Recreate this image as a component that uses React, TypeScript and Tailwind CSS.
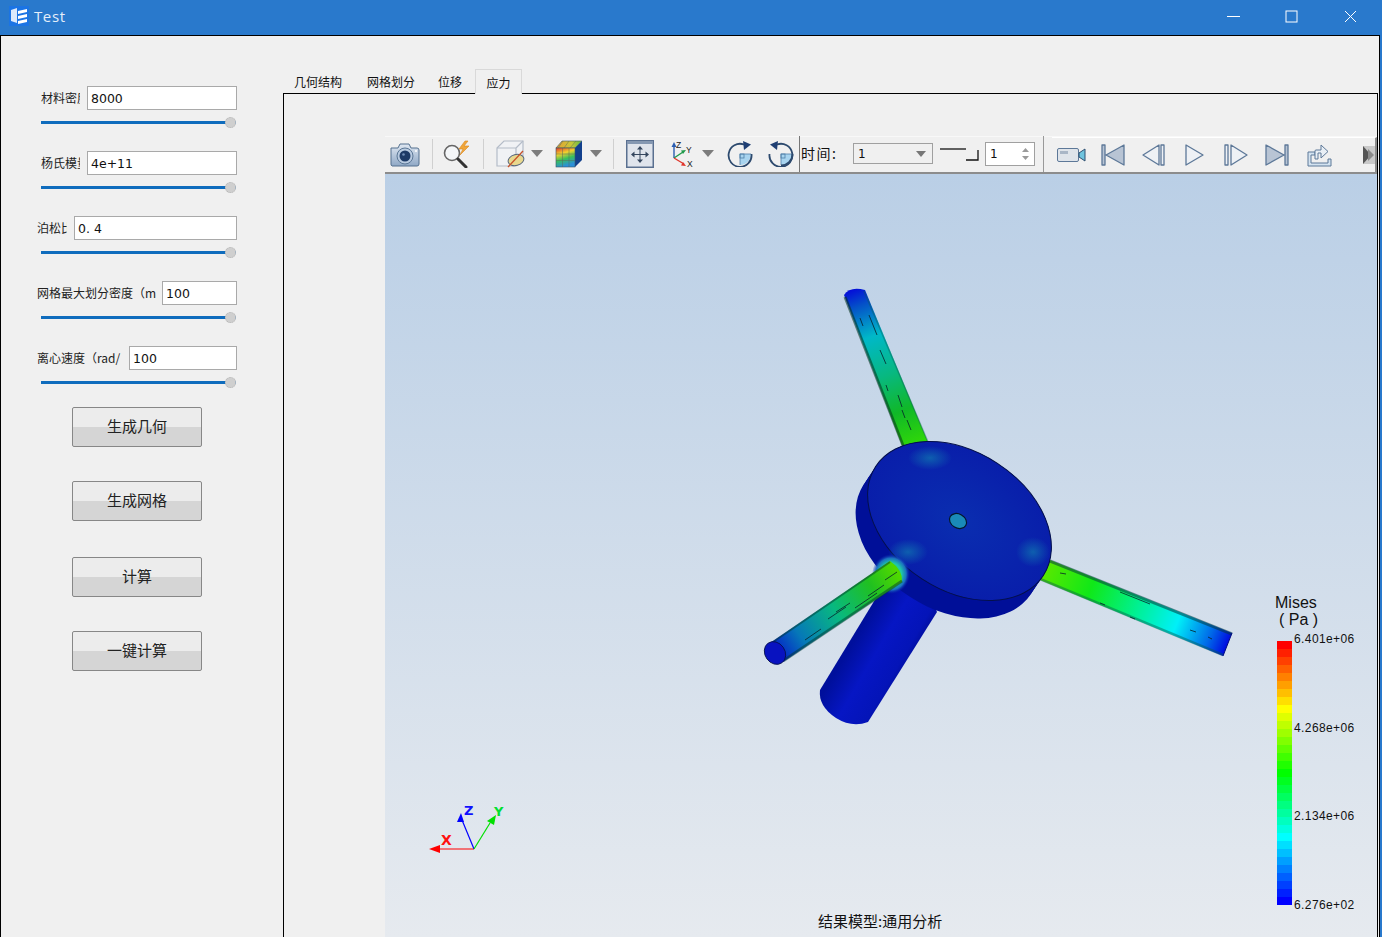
const cjk = "font-['Noto_Sans_CJK_SC','Liberation_Sans',sans-serif]";

const params = [
  { label: '材料密度', value: '8000', labelClass: 'ml-[4px] w-[39px]', gapClass: 'mr-[7px]' },
  { label: '杨氏模量', value: '4e+11', labelClass: 'ml-[4px] w-[39px]', gapClass: 'mr-[7px]' },
  { label: '泊松比', value: '0. 4', labelClass: 'w-[30px]', gapClass: 'mr-[7px]' },
  { label: '网格最大划分密度（m', value: '100', labelClass: 'w-[119px]', gapClass: 'mr-[6px]' },
  { label: '离心速度（rad/', value: '100', labelClass: 'w-[86px]', gapClass: 'mr-[6px]' },
];

const buttons = [
  { text: '生成几何', cls: 'mb-[34px]' },
  { text: '生成网格', cls: 'mb-[36px]' },
  { text: '计算', cls: 'mb-[34px]' },
  { text: '一键计算', cls: '' },
];

const tabs = [
  { text: '几何结构', cls: 'w-[72px] pl-[10px]' },
  { text: '网格划分', cls: 'w-[72px] pl-[11px]' },
  { text: '位移', cls: 'w-[37px] pl-[10px] mr-[1px]' },
];

// legend colour bands, red at the top to blue at the bottom
function bandColor(t: number) {
  const stops: [number, number, number, number][] = [
    [0, 255, 0, 0],
    [0.25, 255, 255, 0],
    [0.5, 0, 255, 0],
    [0.75, 0, 255, 255],
    [1, 0, 0, 255],
  ];
  for (let i = 0; i < stops.length - 1; i++) {
    const a = stops[i];
    const b = stops[i + 1];
    if (t <= b[0]) {
      const k = (t - a[0]) / (b[0] - a[0]);
      return `rgb(${a[1] + (b[1] - a[1]) * k},${a[2] + (b[2] - a[2]) * k},${a[3] + (b[3] - a[3]) * k})`;
    }
  }
  return 'rgb(0,0,255)';
}
const bands = Array.from({ length: 33 }, (_, i) => bandColor(i / 32));

const legendTicks = [
  { text: '6.401e+06', cls: 'top-[457px]' },
  { text: '4.268e+06', cls: 'top-[546px]' },
  { text: '2.134e+06', cls: 'top-[634px]' },
  { text: '6.276e+02', cls: 'top-[723px]' },
];

function CameraIcon() {
  return (
    <svg className="w-[30px] h-[26px]" viewBox="0 0 30 26">
      <defs>
        <linearGradient id="camBody" x1="0" y1="0" x2="0" y2="1">
          <stop offset="0" stopColor="#dfe7f1" />
          <stop offset="1" stopColor="#8fa8c6" />
        </linearGradient>
      </defs>
      <path d="M1 7h7l2-4h9l2 4h6a2 2 0 0 1 2 2v14a2 2 0 0 1-2 2H2a2 2 0 0 1-1-2z" fill="url(#camBody)" stroke="#54708f" strokeWidth="1" />
      <circle cx="15" cy="15" r="8" fill="#b9cbe0" stroke="#5a7695" />
      <circle cx="15" cy="15" r="5.5" fill="#1d3a66" />
      <circle cx="13.5" cy="13.5" r="1.3" fill="#6f8db5" />
      <circle cx="26" cy="10" r="1" fill="#ffffff" />
    </svg>
  );
}

function SearchBoltIcon() {
  return (
    <svg className="w-[30px] h-[28px]" viewBox="0 0 30 28">
      <circle cx="10" cy="13" r="7.5" fill="#f4f6f8" stroke="#666" strokeWidth="1.600" />
      <path d="M16 19l8 8" stroke="#333" strokeWidth="3" strokeLinecap="round" />
      <path d="M23 1l-6 8h4l-3 6 9-9h-5l4-5z" fill="#f0a63a" stroke="#d9861f" strokeWidth="0.6" />
    </svg>
  );
}

function HiddenCubeIcon() {
  return (
    <svg className="w-[30px] h-[28px]" viewBox="0 0 30 28">
      <path d="M1 8l7-7h19v17l-7 8H1z" fill="#f0f2f5" stroke="#b4bcc8" strokeWidth="1.2" />
      <path d="M1 8h19v18M20 8l7-7" fill="none" stroke="#b4bcc8" strokeWidth="1.2" />
      <ellipse cx="20" cy="20" rx="8" ry="5.5" fill="#e8d88e" stroke="#56657a" strokeWidth="1" transform="rotate(-15 20 20)" />
      <path d="M12 27L27 11" stroke="#c8522a" strokeWidth="1.3" />
    </svg>
  );
}

function ColorCubeIcon() {
  return (
    <svg className="w-[28px] h-[28px]" viewBox="0 0 28 28">
      <defs>
        <linearGradient id="cubeFront" x1="0" y1="0" x2="0.3" y2="1">
          <stop offset="0" stopColor="#e0392a" />
          <stop offset="0.35" stopColor="#f2d22e" />
          <stop offset="0.65" stopColor="#38c05a" />
          <stop offset="1" stopColor="#2b8fd8" />
        </linearGradient>
        <linearGradient id="cubeTop" x1="0" y1="0" x2="1" y2="0">
          <stop offset="0" stopColor="#e8a030" />
          <stop offset="0.6" stopColor="#c8c838" />
          <stop offset="1" stopColor="#58b848" />
        </linearGradient>
      </defs>
      <path d="M1 8l6-7h20L20 8z" fill="url(#cubeTop)" stroke="#3b5568" strokeWidth="0.6" />
      <path d="M20 8l7-7v19l-7 7z" fill="#12408c" />
      <rect x="1" y="8" width="19" height="19" fill="url(#cubeFront)" stroke="#3b5568" strokeWidth="0.6" />
      <path d="M7.5 8v19M14 8v19M1 14h19M1 20.5h19M8 1L3 8M14 1L9 8M21 1l-6 7" stroke="#5a6a5a" strokeWidth="0.5" />
    </svg>
  );
}

function DropArrow() {
  return (
    <svg className="w-[12px] h-[7px]" viewBox="0 0 12 7">
      <path d="M0 0h12L6 7z" fill="#7c7c7c" />
    </svg>
  );
}

function FitIcon() {
  return (
    <svg className="w-[28px] h-[28px]" viewBox="0 0 28 28">
      <rect x="0.75" y="0.75" width="26.500" height="26.500" fill="#dfe4ec" stroke="#5a7090" strokeWidth="1.500" />
      <rect x="1" y="1" width="26" height="3" fill="#8598b2" />
      <path d="M14 8v13M8 14.500h12" stroke="#34465e" strokeWidth="1" />
      <path d="M14 6l-3 3.500h6zM14 23l-3-3.500h6zM5 14.500l3.500-3v6zM23 14.500l-3.500-3v6z" fill="#34465e" />
    </svg>
  );
}

function AxesIcon() {
  return (
    <svg className="w-[26px] h-[28px]" viewBox="0 0 26 28">
      <path d="M4 18V6" stroke="#2b5db0" strokeWidth="1.4" />
      <path d="M4 2l-2.500 5h5z" fill="#2b5db0" />
      <path d="M4 18l9-6" stroke="#1f9a4a" strokeWidth="1.4" />
      <path d="M16 10l-5 .5 2 3.500z" fill="#1f9a4a" />
      <path d="M4 18l10 6" stroke="#e0352b" strokeWidth="1.4" />
      <path d="M16 26l-5-.5 2-3.500z" fill="#e0352b" />
      <text x="6" y="8" fontSize="8.500" fontFamily="'Liberation Sans',sans-serif" fill="#222">Z</text>
      <text x="16" y="13" fontSize="8.500" fontFamily="'Liberation Sans',sans-serif" fill="#222">Y</text>
      <text x="17" y="27" fontSize="8.500" fontFamily="'Liberation Sans',sans-serif" fill="#222">X</text>
    </svg>
  );
}

function RotateIcon({ flip }: { flip?: boolean }) {
  return (
    <svg className="w-[26px] h-[27px]" viewBox="0 0 26 27">
      <path d="M13 14h11a11 11 0 0 1-11 11z" fill="#a8d4ef" />
      <rect x="13" y="14" width="4" height="4" fill="none" stroke="#4f7fa8" strokeWidth="0.8" />
      <path d="M13 14h11M13 14v11" stroke="#4f7fa8" strokeWidth="0.8" />
      <g transform={flip ? 'translate(26 0) scale(-1 1)' : undefined}>
        <path d="M17 4.500A11.500 11.500 0 1 0 24.500 14" fill="none" stroke="#2d4a6e" strokeWidth="1.800" />
        <path d="M16 1l8 3.500-7 5.500z" fill="#1f3f73" />
      </g>
      {flip && <path d="M24.500 14A11.500 11.500 0 0 1 13 25.500" fill="none" stroke="#2d4a6e" strokeWidth="1.800" />}
    </svg>
  );
}

function VideoIcon() {
  return (
    <svg className="w-[30px] h-[16px]" viewBox="0 0 30 16">
      <rect x="0.500" y="1.500" width="21" height="13" rx="1.500" fill="#dfe4ea" stroke="#5d7898" />
      <rect x="3" y="4" width="8" height="3" fill="#a9b6c6" />
      <path d="M22 6l6-4v12l-6-4z" fill="#6fc4de" stroke="#2f4f70" />
    </svg>
  );
}

function PlayerIcon({ d, fill }: { d: string; fill: string }) {
  return (
    <svg className="w-[24px] h-[22px]" viewBox="0 0 24 22">
      <path d={d} fill={fill} stroke="#5d7898" strokeWidth="1.300" strokeLinejoin="round" />
    </svg>
  );
}

function ShareIcon() {
  return (
    <svg className="w-[26px] h-[24px]" viewBox="0 0 26 24">
      <path d="M1 9h7v3H4v8h17v-4h3v7H1z" fill="#d4e3f0" stroke="#5d7898" />
      <path d="M8 16V8a1 1 0 0 1 1-1h5V2l7 6.500-7 6.500v-5h-3v6z" fill="#e9eff5" stroke="#5d7898" />
    </svg>
  );
}

function Model() {
  const sideOffsets = [0, 0.2, 0.4, 0.6, 0.8, 1];
  return (
    <svg className="absolute inset-0 w-full h-full" viewBox="385 174 992 763">
      <defs>
        <linearGradient id="armTop" gradientUnits="userSpaceOnUse" x1="853" y1="290" x2="915" y2="445">
          <stop offset="0" stopColor="#0410d8" />
          <stop offset="0.1" stopColor="#0450c8" />
          <stop offset="0.3" stopColor="#00b8c8" />
          <stop offset="0.55" stopColor="#08b880" />
          <stop offset="0.78" stopColor="#10b828" />
          <stop offset="1" stopColor="#30d808" />
        </linearGradient>
        <linearGradient id="armRight" gradientUnits="userSpaceOnUse" x1="1045" y1="570" x2="1228" y2="645">
          <stop offset="0" stopColor="#58e800" />
          <stop offset="0.25" stopColor="#10e818" />
          <stop offset="0.5" stopColor="#00f090" />
          <stop offset="0.72" stopColor="#00f0f8" />
          <stop offset="0.9" stopColor="#0068e8" />
          <stop offset="1" stopColor="#0008e0" />
        </linearGradient>
        <linearGradient id="armLeft" gradientUnits="userSpaceOnUse" x1="776" y1="652" x2="896" y2="571">
          <stop offset="0" stopColor="#0420c8" />
          <stop offset="0.2" stopColor="#0678b8" />
          <stop offset="0.5" stopColor="#08b880" />
          <stop offset="0.8" stopColor="#20c020" />
          <stop offset="1" stopColor="#50d800" />
        </linearGradient>
        <linearGradient id="thick" gradientUnits="userSpaceOnUse" x1="825" y1="690" x2="880" y2="722">
          <stop offset="0" stopColor="#000f9c" />
          <stop offset="0.4" stopColor="#0616c4" />
          <stop offset="0.8" stopColor="#0414b8" />
          <stop offset="1" stopColor="#000c90" />
        </linearGradient>
        <radialGradient id="face" cx="0.5" cy="0.5" r="0.7">
          <stop offset="0" stopColor="#0a2eb0" />
          <stop offset="1" stopColor="#0818a8" />
        </radialGradient>
        <radialGradient id="halo">
          <stop offset="0" stopColor="#30d020" />
          <stop offset="0.55" stopColor="#20c8a8" />
          <stop offset="0.8" stopColor="#1a70c0" />
          <stop offset="1" stopColor="#0a20b0" stopOpacity="0" />
        </radialGradient>
        <radialGradient id="patch">
          <stop offset="0" stopColor="#0f6eb0" stopOpacity="0.8" />
          <stop offset="1" stopColor="#0f6eb0" stopOpacity="0" />
        </radialGradient>
      </defs>

      {/* thick lower shaft */}
      <path d="M820 690L890 575L925 585L937 612L868 722Q852 728 836 718Q818 706 820 690Z" fill="url(#thick)" />

      {/* upper arm */}
      <path d="M844 295Q850 286 865 290L928 442L903 448Z" fill="url(#armTop)" />
      <path d="M845 297L904 448" stroke="#05301c" strokeWidth="3" opacity="0.55" />
      <path d="M864 291L928 442" stroke="#0a5a5a" strokeWidth="1.500" opacity="0.4" />
      <path d="M869 315l8 20M880 350l6 14M898 395l4 12M907 420l4 10M860 318l3 8M886 385l2 6M902 410l3 8" stroke="#06222a" strokeWidth="0.8" fill="none" />

      {/* right arm */}
      <path d="M1050 560L1232 633L1223 656L1040 580Z" fill="url(#armRight)" />
      <path d="M1050 561L1232 634" stroke="#053a40" strokeWidth="3" opacity="0.55" />
      <path d="M1040 579L1223 655" stroke="#0a5a50" strokeWidth="2.500" opacity="0.45" />
      <path d="M1120 592l30 12M1190 630l6 2M1100 603l5 2M1130 617l5 2M1208 637l4 2M1060 573l6 1" stroke="#06222a" strokeWidth="0.8" fill="none" />
      <path d="M1232 633L1223 656" stroke="#000a80" strokeWidth="1" />

      {/* disc body */}
      {sideOffsets.map((k) => (
        <ellipse key={k} cx={959.5 - 12 * k} cy={521 + 18 * k} rx="100" ry="69" transform={`rotate(33 ${959.5 - 12 * k} ${521 + 18 * k})`} fill="#000f98" />
      ))}
      <ellipse cx="959.5" cy="521" rx="100" ry="69" transform="rotate(33 959.5 521)" fill="url(#face)" stroke="#04104a" strokeWidth="1" />
      <ellipse cx="930" cy="458" rx="22" ry="12" fill="url(#patch)" />
      <ellipse cx="1033" cy="552" rx="17" ry="15" fill="url(#patch)" />
      <ellipse cx="908" cy="552" rx="20" ry="13" fill="url(#patch)" />
      <ellipse cx="958" cy="521" rx="9" ry="7" transform="rotate(30 958 521)" fill="#1a8ab8" stroke="#04182a" strokeWidth="1.200" />

      {/* left arm and its hub */}
      <ellipse cx="891" cy="574" rx="19" ry="20" fill="url(#halo)" />
      <path d="M770 643L890 561Q903 570 902 582L783 662Z" fill="url(#armLeft)" />
      <path d="M770 644L890 562" stroke="#053a30" strokeWidth="2" opacity="0.5" />
      <path d="M783 661L902 581" stroke="#053a30" strokeWidth="3" opacity="0.5" />
      <path d="M805 640l16-11M828 619l18-12M855 608l22-15M868 596l16-11M836 612l14-9M885 580l12-8" stroke="#06222a" strokeWidth="0.8" fill="none" />
      <ellipse cx="775" cy="653" rx="10" ry="12" transform="rotate(-35 775 653)" fill="#0812c0" stroke="#04104a" strokeWidth="0.8" />

      {/* triad */}
      <path d="M474 849H438" stroke="#ff0000" strokeWidth="1.200" />
      <path d="M429 849l11-4v8z" fill="#ff0000" />
      <path d="M474 849L462 820" stroke="#0000ff" strokeWidth="1.200" />
      <path d="M461 813l3 9h-7z" fill="#0000ff" />
      <path d="M474 849L490 823" stroke="#00e000" strokeWidth="1.200" />
      <path d="M496 815l-2 10-7-4z" fill="#00e000" />
      <text x="441" y="845" fontSize="14" fontWeight="700" fontFamily="'DejaVu Sans',sans-serif" fill="#ff1010">X</text>
      <text x="464" y="815" fontSize="13" fontWeight="700" fontFamily="'DejaVu Sans',sans-serif" fill="#1010ff">Z</text>
      <text x="494" y="816" fontSize="13" fontWeight="700" fontFamily="'DejaVu Sans',sans-serif" fill="#00e030">Y</text>
    </svg>
  );
}

export default function App() {
  return (
    <div className={`h-[937px] w-[1382px] overflow-hidden flex flex-col bg-[#2979cc] ${cjk}`}>
      {/* title bar */}
      <div className="h-[35px] shrink-0 flex items-center pb-[3px] text-white">
        <svg className="ml-[9px] w-[20px] h-[20px]" viewBox="0 0 20 20">
          <rect width="20" height="20" fill="#1b74e4" />
          <path d="M2 4l6-2v15l-6-2z" fill="#dbe9fb" />
          <path d="M9 5l9-2v3l-9 2zM9 10l9-2v3l-9 2zM9 15l9-2v3l-9 2z" fill="#ffffff" />
        </svg>
        <span className="ml-[5px] w-[32px] text-[15px] tracking-[0.6px] text-[#e4eefa] font-['Open_Sans',sans-serif]">Test</span>
        <svg className="ml-[1161px] w-[13px] h-[13px]" viewBox="0 0 13 13">
          <path d="M0 6.500h13" stroke="#ffffff" strokeWidth="1" />
        </svg>
        <svg className="ml-[45px] w-[13px] h-[13px]" viewBox="0 0 13 13">
          <rect x="1" y="1" width="11" height="11" fill="none" stroke="#ffffff" strokeWidth="1" />
        </svg>
        <svg className="ml-[46px] w-[13px] h-[13px]" viewBox="0 0 13 13">
          <path d="M1 1l11 11M12 1L1 12" stroke="#ffffff" strokeWidth="1" />
        </svg>
      </div>

      <div className="flex-1 min-h-0 mr-[2px] flex border-t border-l border-r border-black bg-[#f0f0f0]">
        {/* parameter panel */}
        <div className="w-[282px] shrink-0 pl-[36px] pt-[50px]">
          <div className="w-[200px] h-[321px]">
            {params.map((p) => (
              <div key={p.label} className="h-[65px]">
                <div className="flex items-center h-[24px]">
                  <span className={`${p.labelClass} ${p.gapClass} shrink-0 overflow-hidden whitespace-nowrap text-[12px] text-[#222]`}>
                    {p.label}
                  </span>
                  <div className="flex-1 h-[24px] border border-[#a9a9a9] bg-white pl-[3px] leading-[24px] text-[12.500px] text-[#111] font-['DejaVu_Sans',sans-serif]">
                    {p.value}
                  </div>
                </div>
                <div className="relative ml-[4px] mr-[1px] mt-[11px] h-[3px] bg-[#0f6cbd]">
                  <div className="absolute right-[0px] top-[-4px] w-[11px] h-[11px] rounded-full bg-[#cfcfcf] border border-dotted border-[#b5b5b5]" />
                </div>
              </div>
            ))}
          </div>
          <div className="ml-[35px]">
            {buttons.map((b) => (
              <div
                key={b.text}
                className={`${b.cls} w-[130px] h-[40px] rounded-[2px] border border-[#878787] bg-[linear-gradient(to_bottom,#ececec_0%,#ececec_50%,#d5d5d5_50%,#d5d5d5_100%)] flex items-center justify-center pb-[2px] text-[15px] text-[#222]`}
              >
                {b.text}
              </div>
            ))}
          </div>
        </div>

        {/* tabs and result view */}
        <div className="flex-1 min-w-0 flex flex-col pr-[1px] pt-[33px]">
          <div className="h-[24px] shrink-0 flex items-end ml-[1px]">
            {tabs.map((t) => (
              <div key={t.text} className={`${t.cls} h-[24px] leading-[26px] text-[12px] text-[#111] whitespace-nowrap`}>
                {t.text}
              </div>
            ))}
            <div className="ml-[9px] w-[47px] h-[25px] -mb-[1px] relative border-t border-l border-r border-[#d9d9d9] bg-[#f0f0f0] text-center leading-[25px] text-[12px] text-[#111]">
              应力
            </div>
          </div>
          <div className="flex-1 min-h-0 flex flex-col border-t border-l border-r border-black pl-[101px] pt-[42px]">
            {/* viewer toolbar */}
            <div className="h-[38px] shrink-0 flex items-center pb-[2px] border-t border-t-[#f8f8f8] border-b-2 border-b-[#8c8c8c] bg-[#f0f0f0]">
              <div className="ml-[5px]"><CameraIcon /></div>
              <div className="ml-[12px] w-px h-[30px] bg-[#d0d0d0]" />
              <div className="ml-[9px]"><SearchBoltIcon /></div>
              <div className="ml-[11px] w-px h-[30px] bg-[#d0d0d0]" />
              <div className="ml-[12px]"><HiddenCubeIcon /></div>
              <div className="ml-[5px]"><DropArrow /></div>
              <div className="ml-[12px]"><ColorCubeIcon /></div>
              <div className="ml-[7px]"><DropArrow /></div>
              <div className="ml-[11px] w-px h-[30px] bg-[#d0d0d0]" />
              <div className="ml-[12px]"><FitIcon /></div>
              <div className="ml-[16px]"><AxesIcon /></div>
              <div className="ml-[6px]"><DropArrow /></div>
              <div className="ml-[13px]"><RotateIcon /></div>
              <div className="ml-[15px]"><RotateIcon flip /></div>
              <div className="ml-[5px] w-px h-[36px] bg-[#777]" />
              <span className="ml-[1px] w-[52px] shrink-0 text-[14px] tracking-[1.500px] text-[#111] whitespace-nowrap">时间:</span>
              <div className="w-[80px] h-[21px] shrink-0 border border-[#a0a0a0] flex items-center justify-between pl-[4px] pr-[6px] text-[12px] text-[#111] font-['DejaVu_Sans',sans-serif]">
                1
                <svg className="w-[10px] h-[6px]" viewBox="0 0 10 6">
                  <path d="M0 0h10L5 6z" fill="#777" />
                </svg>
              </div>
              <svg className="ml-[7px] w-[39px] h-[16px] shrink-0" viewBox="0 0 39 16">
                <path d="M0 3h26" stroke="#111" strokeWidth="1.300" />
                <path d="M26 14h12V4" fill="none" stroke="#111" strokeWidth="1.300" />
              </svg>
              <div className="ml-[6px] w-[50px] h-[24px] shrink-0 border border-[#a0a0a0] bg-white flex items-center justify-between pl-[4px] pr-[5px] text-[12px] text-[#111] font-['DejaVu_Sans',sans-serif]">
                1
                <svg className="w-[7px] h-[12px]" viewBox="0 0 7 12">
                  <path d="M3.500 0L7 4H0zM0 8h7l-3.500 4z" fill="#9a9a9a" />
                </svg>
              </div>
              <div className="ml-[8px] w-px h-[36px] bg-[#999]" />
              <div className="ml-[8px] h-[35px] flex-1 min-w-0 self-start flex items-center border-t border-t-white border-r-2 border-r-[#8c8c8c]">
                <div className="ml-[5px]"><VideoIcon /></div>
                <div className="ml-[14px]"><PlayerIcon d="M1 1h3v20H1zM23 1v20L5 11z" fill="#b8c4d4" /></div>
                <div className="ml-[17px]"><PlayerIcon d="M17 1v20L1 11zM19 1h3v20h-3z" fill="#eef1f5" /></div>
                <div className="ml-[17px]"><PlayerIcon d="M3 1v20l17-10z" fill="#eef1f5" /></div>
                <div className="ml-[17px]"><PlayerIcon d="M1 1h3v20H1zM7 1v20l16-10z" fill="#eef1f5" /></div>
                <div className="ml-[17px]"><PlayerIcon d="M1 1v20l18-10zM20 1h3v20h-3z" fill="#b8c4d4" /></div>
                <div className="ml-[18px]"><ShareIcon /></div>
                <svg className="ml-[30px] w-[12px] h-[18px]" viewBox="0 0 12 18">
                  <rect width="12" height="18" fill="#c9c9c9" />
                  <path d="M0 0l8 9-8 9z" fill="#555" />
                  <path d="M5 3l6 6-6 6z" fill="#8a8a8a" />
                </svg>
              </div>
            </div>

            {/* 3d scene */}
            <div className="relative flex-1 min-h-0 bg-[linear-gradient(to_bottom,#bacfe6,#e6eaef)]">
              <Model />
              <div className="absolute left-[890px] top-[420px] text-[16px] leading-[17px] text-[#111] font-['Liberation_Sans',sans-serif]">
                Mises
                <div className="pl-[4px]">( Pa )</div>
              </div>
              <div className="absolute left-[892px] top-[467px] w-[15px] h-[264px] flex flex-col">
                {bands.map((c, i) => (
                  <div key={i} className="flex-1" style={{ background: c }} />
                ))}
              </div>
              {legendTicks.map((t) => (
                <span key={t.text} className={`${t.cls} absolute left-[909px] text-[12px] leading-[16px] tracking-[0.4px] text-[#111] font-['Liberation_Sans',sans-serif]`}>
                  {t.text}
                </span>
              ))}
              <span className="absolute left-[433px] top-[737px] text-[15px] leading-[20px] text-[#111]">结果模型:通用分析</span>
            </div>
          </div>
        </div>
      </div>
    </div>
  );
}
